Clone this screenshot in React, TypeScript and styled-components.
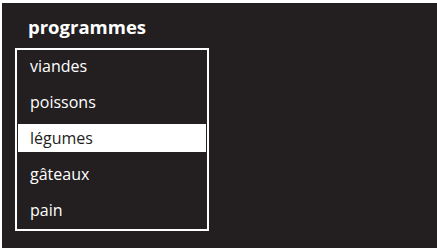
import styled, { createGlobalStyle } from "styled-components";

const GlobalStyle = createGlobalStyle`
  html, body {
    margin: 0;
    padding: 0;
    background: #ffffff;
  }
  body {
    font-family: "Open Sans", "Liberation Sans", sans-serif;
  }
`;

const programmes = ["viandes", "poissons", "légumes", "gâteaux", "pain"];
const selectedIndex = 2;

const App = () => {
  return (
    <>
      <GlobalStyle />
      <Screen>
        <Title>programmes</Title>
        <ListBox>
          {programmes.map((name, i) => (
            <Item key={name} selected={i === selectedIndex}>
              {name}
            </Item>
          ))}
        </ListBox>
      </Screen>
    </>
  );
};

export default App;

const Screen = styled.div`
  margin: 3px 0 0 2px;
  width: 435px;
  height: 245px;
  box-sizing: border-box;
  background-color: #231f20;
  padding: 13px 0 0 13px;
  display: flex;
  flex-direction: column;
`;

const Title = styled.h1`
  margin: 0 0 0 13px;
  height: 32px;
  font-size: 18.5px;
  font-weight: 700;
  line-height: 22px;
  color: #ffffff;
`;

const ListBox = styled.ul`
  list-style: none;
  margin: 0;
  width: 194px;
  height: 183px;
  box-sizing: border-box;
  border: 2px solid #ffffff;
  padding: 2px 1px 0;
  display: flex;
  flex-direction: column;
  gap: 8px;
`;

const Item = styled.li<{ selected: boolean }>`
  height: 28px;
  padding-left: 12px;
  display: flex;
  align-items: center;
  font-size: 16px;
  color: ${(p) => (p.selected ? "#231f20" : "#ffffff")};
  background-color: ${(p) => (p.selected ? "#ffffff" : "transparent")};
`;
